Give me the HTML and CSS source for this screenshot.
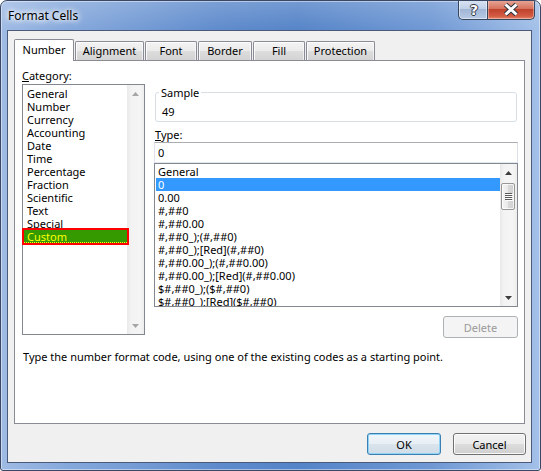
FILE: index.html
```html
<!DOCTYPE html>
<html>
<head>
<meta charset="utf-8">
<title>Format Cells</title>
<link rel="stylesheet" href="styles.css">
</head>
<body>
<div class="window">
  <div class="titlebar">
    <span class="title">Format Cells</span>
    <div class="caption-btns">
      <div class="cbtn help"><span class="help-glyph">?</span></div>
      <div class="cbtn close">
        <svg width="46" height="19" viewBox="0 0 46 19">
          <path d="M17.5 4.5 L28.5 14.5 M28.5 4.5 L17.5 14.5" stroke="#2e3440" stroke-width="5" fill="none"/>
          <path d="M17.5 4.5 L28.5 14.5 M28.5 4.5 L17.5 14.5" stroke="#ffffff" stroke-width="3" fill="none"/>
        </svg>
      </div>
    </div>
  </div>
  <div class="client">
    <div class="tabs">
      <div class="tab tab-number active">Number</div>
      <div class="tab tab-alignment">Alignment</div>
      <div class="tab tab-font">Font</div>
      <div class="tab tab-border">Border</div>
      <div class="tab tab-fill">Fill</div>
      <div class="tab tab-protection">Protection</div>
    </div>
    <div class="panel">
      <div class="panel-main">
        <div class="col-left">
          <div class="label"><u>C</u>ategory:</div>
          <div class="listbox category">
            <ul class="items">
              <li>General</li>
              <li>Number</li>
              <li>Currency</li>
              <li>Accounting</li>
              <li>Date</li>
              <li>Time</li>
              <li>Percentage</li>
              <li>Fraction</li>
              <li>Scientific</li>
              <li>Text</li>
              <li>Special</li>
              <li class="custom">Custom</li>
            </ul>
            <div class="vscroll disabled">
              <div class="sbtn"><svg width="7" height="4" viewBox="0 0 7 4"><polygon points="0,4 3.5,0 7,4"/></svg></div>
              <div class="track"></div>
              <div class="sbtn"><svg width="7" height="4" viewBox="0 0 7 4"><polygon points="0,0 3.5,4 7,0"/></svg></div>
            </div>
          </div>
        </div>
        <div class="col-right">
          <fieldset class="sample">
            <legend>Sample</legend>
            <div class="sample-value">49</div>
          </fieldset>
          <div class="label type-label"><u>T</u>ype:</div>
          <div class="textbox">0</div>
          <div class="listbox types">
            <ul class="items">
              <li>General</li>
              <li class="selected">0</li>
              <li>0.00</li>
              <li>#,##0</li>
              <li>#,##0.00</li>
              <li>#,##0_);(#,##0)</li>
              <li>#,##0_);[Red](#,##0)</li>
              <li>#,##0.00_);(#,##0.00)</li>
              <li>#,##0.00_);[Red](#,##0.00)</li>
              <li>$#,##0_);($#,##0)</li>
              <li>$#,##0_);[Red]($#,##0)</li>
            </ul>
            <div class="vscroll">
              <div class="sbtn up"><svg width="7" height="4" viewBox="0 0 7 4"><polygon points="0,4 3.5,0 7,4"/></svg></div>
              <div class="thumb">
                <svg width="8" height="8" viewBox="0 0 8 8">
                  <rect x="0" y="0" width="7" height="1" fill="#5a5a5a"/>
                  <rect x="0" y="2" width="7" height="1" fill="#5a5a5a"/>
                  <rect x="0" y="4" width="7" height="1" fill="#5a5a5a"/>
                  <rect x="0" y="6" width="7" height="1" fill="#5a5a5a"/>
                  <rect x="1" y="1" width="7" height="1" fill="#ffffff"/>
                  <rect x="1" y="3" width="7" height="1" fill="#ffffff"/>
                  <rect x="1" y="5" width="7" height="1" fill="#ffffff"/>
                  <rect x="1" y="7" width="7" height="1" fill="#ffffff"/>
                </svg>
              </div>
              <div class="track"></div>
              <div class="sbtn"><svg width="7" height="4" viewBox="0 0 7 4"><polygon points="0,0 3.5,4 7,0"/></svg></div>
            </div>
          </div>
          <div class="delete-row"><button class="btn disabled" type="button">Delete</button></div>
        </div>
      </div>
      <p class="desc">Type the number format code, using one of the existing codes as a starting point.</p>
    </div>
    <div class="buttons">
      <button class="btn default" type="button">OK</button>
      <button class="btn" type="button">Cancel</button>
    </div>
  </div>
</div>
</body>
</html>
```
FILE: styles.css
```css
* { box-sizing: border-box; }

body {
  margin: 0;
  background: #ffffff;
  font-family: "Noto Sans", "Open Sans", sans-serif;
  font-size: 11px;
  line-height: 13px;
  color: #000;
}

.window {
  width: 541px;
  height: 471px;
  border: 1px solid #3a4865;
  border-radius: 7px 7px 3px 3px;
  background:
    linear-gradient(180deg, rgba(255,255,255,0.18), rgba(255,255,255,0) 30px),
    linear-gradient(90deg, #9fbbe4 0%, #86a9dc 12%, #5f8bcc 40%, #5584c8 55%, #6f98d4 80%, #a3c0e8 100%);
  display: flex;
  flex-direction: column;
  overflow: hidden;
  box-shadow: inset 0 0 0 1px rgba(255,255,255,0.45);
}

.titlebar {
  height: 29px;
  flex: none;
  display: flex;
  justify-content: space-between;
  align-items: flex-start;
  padding: 0 5px 0 7px;
}

.title {
  margin-top: 8px;
  font-size: 12px;
  line-height: 13px;
  color: #000;
  text-shadow: 0 0 5px #ffffff, 0 0 7px #ffffff, 0 0 9px rgba(255,255,255,0.8);
}

.caption-btns {
  display: flex;
  margin-top: -1px;
}

.cbtn {
  height: 20px;
  border: 1px solid #37465f;
  border-top: none;
  display: flex;
  align-items: center;
  justify-content: center;
}

.help {
  width: 29px;
  border-right: none;
  border-radius: 0 0 0 5px;
  background: linear-gradient(180deg, #dbe5f3 0%, #c0d0e8 45%, #a2b6d6 50%, #b7c9e4 100%);
  box-shadow: inset 0 0 0 1px rgba(255,255,255,0.5);
}

.help-glyph {
  font-family: "DejaVu Sans", sans-serif;
  font-weight: bold;
  font-size: 14px;
  line-height: 14px;
  color: #ffffff;
  margin-left: 2px;
  text-shadow: 1px 0 0 #2e3440, -1px 0 0 #2e3440, 0 1px 0 #2e3440, 0 -1px 0 #2e3440;
}

.close {
  width: 48px;
  border-radius: 0 0 5px 0;
  background: linear-gradient(180deg, #e9a99a 0%, #d6735e 45%, #c0432c 50%, #d45a43 85%, #e48a6a 100%);
  box-shadow: inset 0 0 0 1px rgba(255,255,255,0.35);
}

.close svg { display: block; }

.client {
  flex: none;
  height: 433px;
  margin: 0 8px 0 6px;
  background: #f0f0f0;
  border: 1px solid #4a5a78;
  padding: 8px 6px 7px 6px;
  display: flex;
  flex-direction: column;
}

.tabs {
  height: 21px;
  display: flex;
  align-items: flex-end;
  position: relative;
  z-index: 2;
}

.tab {
  height: 19px;
  margin-right: 1px;
  border: 1px solid #898c95;
  border-bottom: none;
  border-radius: 2px 2px 0 0;
  background: linear-gradient(180deg, #f3f3f3 0%, #ebebeb 50%, #dddddd 51%, #d3d3d3 100%);
  text-align: center;
  padding-top: 2px;
  box-shadow: inset 1px 1px 0 rgba(255,255,255,0.8), inset -1px 0 0 rgba(255,255,255,0.6);
}

.tab.active {
  height: 22px;
  margin-bottom: -1px;
  background: #ffffff;
  padding-top: 3px;
  box-shadow: none;
}

.tab-number { width: 60px; }
.tab-alignment { width: 69px; }
.tab-font { width: 52px; }
.tab-border { width: 54px; }
.tab-fill { width: 52px; }
.tab-protection { width: 69px; }

.panel {
  height: 364px;
  background: #ffffff;
  border: 1px solid #898c95;
  padding: 8px 6px 0 7px;
}

.panel-main {
  display: flex;
  gap: 9px;
}

.col-left { width: 123px; }
.col-right { width: 364px; padding-top: 17px; }

.label {
  height: 13px;
  margin-bottom: 2px;
}

.type-label {
  margin-top: 6px;
  margin-bottom: 1px;
  padding-left: 1px;
}

.listbox {
  border: 1px solid #828790;
  background: #ffffff;
  display: flex;
}

.listbox.category { height: 251px; }
.listbox.types { height: 144px; }

.items {
  list-style: none;
  margin: 0;
  padding: 2px 0 0 0;
  flex: 1;
  min-width: 0;
}

.types .items {
  padding-top: 1px;
  overflow: hidden;
}

.items li {
  height: 13px;
  line-height: 13px;
  white-space: nowrap;
  margin-left: 1px;
}

.category .items li { padding-left: 3px; }
.types .items li { padding-left: 2px; }

.items li.custom {
  position: relative;
  z-index: 1;
  background: #359a00;
  color: #ffff00;
  outline: 2px solid #ff0000;
  border-bottom: 1px dotted #ffff00;
}

.items li.selected {
  background: #3399ff;
  color: #ffffff;
}

.vscroll {
  width: 17px;
  flex: none;
  display: flex;
  flex-direction: column;
  background: linear-gradient(90deg, #e9e9e9 0%, #f3f3f3 25%, #f5f5f5 75%, #ededed 100%);
}

.sbtn {
  height: 17px;
  display: flex;
  align-items: center;
  justify-content: center;
}

.sbtn.up { height: 18px; }

.sbtn svg { display: block; fill: #3d3d3d; }
.vscroll.disabled .sbtn svg { fill: #a6a6a6; }

.track { flex: 1; }

.thumb {
  width: 14px;
  height: 27px;
  margin: 1px 2px 0 1px;
  border: 1px solid #979797;
  border-radius: 2px;
  background: linear-gradient(90deg, #f4f4f4 0%, #e9e9e9 50%, #d9d9d9 51%, #d0d0d0 100%);
  box-shadow: inset 0 0 0 1px rgba(255,255,255,0.75);
  display: flex;
  align-items: center;
  justify-content: center;
}

.thumb svg { display: block; margin-left: 1px; }

.sample {
  margin: 0 1px;
  height: 36px;
  border: 1px solid #d5dfe5;
  border-radius: 3px;
  padding: 6px 6px 2px 6px;
  min-width: 0;
}

.sample legend {
  padding: 0 2px;
  margin-left: -3px;
  line-height: 13px;
}

.sample-value {
  line-height: 13px;
  padding-left: 0px;
}

.textbox {
  height: 21px;
  border: 1px solid #abadb3;
  border-left-color: #e2e3ea;
  border-right-color: #dbdfe6;
  border-bottom-color: #e3e9ef;
  padding-left: 3px;
  line-height: 19px;
  background: #ffffff;
}

.delete-row {
  display: flex;
  justify-content: flex-end;
  margin-top: 9px;
}

.btn {
  font-family: inherit;
  font-size: 11px;
  line-height: 13px;
  height: 22px;
  padding: 0;
  border: 1px solid #707070;
  border-radius: 3px;
  background: linear-gradient(180deg, #f2f2f2 0%, #ebebeb 50%, #dddddd 51%, #cfcfcf 100%);
  box-shadow: inset 0 0 0 1px rgba(255,255,255,0.85);
  color: #000;
}

.btn.disabled {
  width: 75px;
  border-color: #adb2b5;
  background: #f4f4f4;
  color: #9a9a9a;
  box-shadow: none;
}

.desc {
  margin: 12px 0 0 1px;
  line-height: 13px;
}

.buttons {
  display: flex;
  justify-content: flex-end;
  gap: 12px;
  margin-top: 9px;
  margin-right: -1px;
}

.buttons .btn { width: 73px; }

.btn.default {
  width: 74px;
  border-color: #3c7fb1;
  box-shadow: inset 0 0 0 1px #8fd4f7;
  background: linear-gradient(180deg, #f1f6fa 0%, #e8eff5 50%, #d9e4ec 51%, #d0dce6 100%);
}
```
